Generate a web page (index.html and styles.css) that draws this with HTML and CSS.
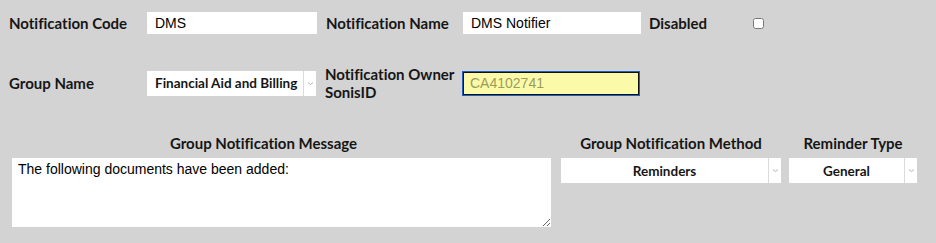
FILE: index.html
```html
<!DOCTYPE html>
<html lang="en">
<head>
    <meta charset="UTF-8">
    <title>Notification Setup</title>
    <link rel="stylesheet" href="styles.css">
</head>
<body>

<div class="form">
    <div class="row row-top">
        <label class="label label-first">Notification Code</label>
        <input type="text" class="text-input code-input" value="DMS">
        <label class="label label-mid">Notification Name</label>
        <input type="text" class="text-input name-input" value="DMS Notifier">
        <label class="label label-last">Disabled</label>
        <input type="checkbox" class="check">
    </div>

    <div class="row row-second">
        <label class="label label-first">Group Name</label>
        <div class="select-box group-select">
            <select class="select select-left">
                <option>Financial Aid and Billing</option>
            </select>
            <span class="arrow"><svg width="7" height="5" viewBox="0 0 7 5"><path d="M1 1.5 L3.5 3.5 L6 1.5" fill="none" stroke="#b4b4b4" stroke-width="1"/></svg></span>
        </div>
        <label class="label label-mid owner-label">Notification Owner SonisID</label>
        <input type="text" class="text-input owner-input" value="CA4102741" readonly>
    </div>

    <div class="row row-third">
        <div class="col col-message">
            <div class="col-title message-title">Group Notification Message</div>
            <textarea class="message">The following documents have been added:</textarea>
        </div>
        <div class="col col-method">
            <div class="col-title">Group Notification Method</div>
            <div class="select-box">
                <select class="select">
                    <option>Reminders</option>
                </select>
                <span class="arrow"><svg width="7" height="5" viewBox="0 0 7 5"><path d="M1 1.5 L3.5 3.5 L6 1.5" fill="none" stroke="#b4b4b4" stroke-width="1"/></svg></span>
            </div>
        </div>
        <div class="col col-type">
            <div class="col-title">Reminder Type</div>
            <div class="select-box">
                <select class="select">
                    <option>General</option>
                </select>
                <span class="arrow"><svg width="7" height="5" viewBox="0 0 7 5"><path d="M1 1.5 L3.5 3.5 L6 1.5" fill="none" stroke="#b4b4b4" stroke-width="1"/></svg></span>
            </div>
        </div>
    </div>
</div>

</body>
</html>
```

FILE: styles.css
```css
body {
    margin: 0;
    padding: 0;
    background-color: #d3d3d3;
    font-family: Lato, 'Noto Sans', sans-serif;
    font-variant-ligatures: none;
    color: #161616;
}
.form {
    padding-top: 8px;
}
.row {
    display: flex;
    align-items: center;
}
.row-top {
    height: 30px;
    padding-left: 9px;
}
.row-second {
    height: 40px;
    margin-top: 25px;
    padding-left: 9px;
}
.label {
    font-size: 15px;
    font-weight: 700;
    line-height: 18.5px;
}
.label-first {
    width: 138px;
}
.label-mid {
    width: 137px;
    margin-left: 9px;
}
.label-last {
    width: 104px;
    margin-left: 8px;
}
.text-input {
    box-sizing: border-box;
    height: 22px;
    border: none;
    padding: 0 8px;
    font-family: 'Liberation Sans', Arial, sans-serif;
    font-size: 14px;
    color: #000;
    background-color: #fff;
    outline: none;
}
.code-input {
    width: 170px;
}
.name-input {
    width: 178px;
}
.owner-input {
    width: 176px;
    height: 23px;
    margin-left: 1px;
    border: 1px solid #111;
    box-shadow: 0 0 0 1px #1a5fc4;
    background-color: #fafaa9;
    color: #9c9c5c;
    padding: 0 6px;
}
.check {
    width: 11px;
    height: 11px;
    margin: 0;
}
.select-box {
    display: flex;
    height: 25px;
    background-color: #fff;
}
.group-select {
    width: 169px;
}
.select {
    flex: 1;
    min-width: 0;
    appearance: none;
    -webkit-appearance: none;
    border: none;
    background: transparent;
    font-family: Lato, 'Noto Sans', sans-serif;
    font-variant-ligatures: none;
    font-size: 13.5px;
    font-weight: 700;
    color: #161616;
    text-align: center;
    text-align-last: center;
    padding: 0;
    outline: none;
}
.select-left {
    text-align: left;
    text-align-last: left;
    padding-left: 8px;
}
.arrow {
    width: 12px;
    border-left: 1px solid #dadada;
    display: flex;
    align-items: center;
    justify-content: center;
}
.row-third {
    margin-top: 32px;
    align-items: flex-start;
}
.col {
    display: flex;
    flex-direction: column;
}
.col-title {
    font-size: 15px;
    font-weight: 700;
    line-height: 16px;
    text-align: center;
    margin-bottom: 7px;
}
.message-title {
    padding-right: 36px;
}
.col-message {
    margin-left: 12px;
    width: 539px;
}
.col-method {
    margin-left: 10px;
    width: 220px;
}
.col-type {
    margin-left: 8px;
    width: 128px;
}
.message {
    box-sizing: border-box;
    width: 539px;
    height: 69px;
    border: none;
    padding: 3px 6px;
    font-family: 'Liberation Sans', Arial, sans-serif;
    font-size: 14px;
    color: #000;
    background-color: #fff;
    outline: none;
}
```
